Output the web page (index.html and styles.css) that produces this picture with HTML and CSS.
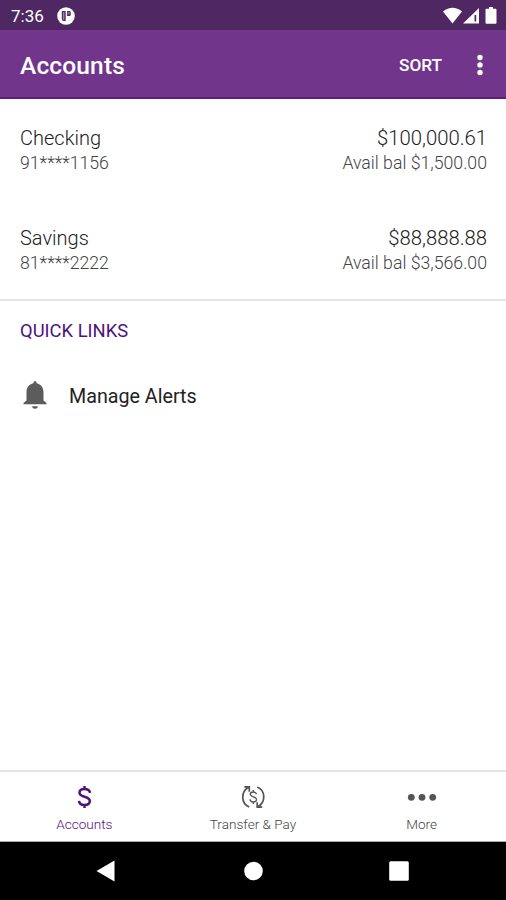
FILE: index.html
```html
<!DOCTYPE html>
<html lang="en">
<head>
<meta charset="utf-8">
<title>Accounts</title>
<link rel="stylesheet" href="styles.css">
</head>
<body>
<div class="status">
  <span class="clock">7:36</span>
  <svg class="app-badge" width="18" height="18" viewBox="0 0 18 18"><circle cx="9" cy="9" r="8.800" fill="#fff"/><path d="M4.800 4h3.900v10H7a2.200 2.200 0 0 1-2.200-2.200zM10.100 4h2.200a1.500 1.500 0 0 1 1.500 1.500v2A1.500 1.500 0 0 1 12.300 9h-2.200z" fill="#4e2763"/><path d="M6 5h1.400v7.800H6zM11 5.200h1.600v2H11z" fill="#9c86a8"/></svg>
  <svg class="signals" width="56" height="18" viewBox="0 0 56 18" fill="#fff"><path d="M0 4.500Q9.500-3 19 4.500L9.500 16.500z"/><path fill-rule="evenodd" d="M20 16.500L36 1v15.500zM31.500 8v6.500h1.700V8z"/><path d="M46 0h4v1.700h2.500q1 0 1 1v13q0 1-1 1h-9q-1 0-1-1v-13q0-1 1-1H46z"/></svg>
</div>
<header class="app-bar">
  <h1>Accounts</h1>
  <span class="sort">SORT</span>
  <svg width="6" height="22" viewBox="0 0 6 22" fill="#fff"><circle cx="3" cy="3.500" r="2.700"/><circle cx="3" cy="11" r="2.700"/><circle cx="3" cy="18.500" r="2.700"/></svg>
</header>
<main>
  <section class="accounts">
    <div class="account">
      <div><div class="name">Checking</div><div class="number">91****1156</div></div>
      <div class="balances"><div class="amount">$100,000.61</div><div class="available">Avail bal $1,500.00</div></div>
    </div>
    <div class="account">
      <div><div class="name">Savings</div><div class="number">81****2222</div></div>
      <div class="balances"><div class="amount">$88,888.88</div><div class="available">Avail bal $3,566.00</div></div>
    </div>
  </section>
  <section class="links">
    <h2>QUICK LINKS</h2>
    <div class="link">
      <svg class="bell" width="24" height="30" viewBox="0 0 24 30" fill="#5c5c5c"><path d="M10.300 3.200Q10.600 1 12 1t1.700 2.200C18 4.200 20.500 7.600 20.500 12v8.500l3 2.600v1.200H.5v-1.200l3-2.600V12c0-4.400 2.500-7.800 6.800-8.800zM9.200 26.200h5.600a2.800 2.500 0 0 1-5.600 0z"/></svg>
      <span>Manage Alerts</span>
    </div>
  </section>
</main>
<nav class="tabs">
  <div class="tab active">
    <svg width="28" height="26" viewBox="0 0 28 26" fill="none" stroke="#4f127d" stroke-width="2.500"><path d="M20 8.900C19.700 6.300 17.700 5 14.500 5c-3 0-5 1.400-5 3.700 0 5.300 10.300 2.900 10.300 8.400 0 2.500-2.100 4-5.300 4-3.400 0-5.300-1.500-5.500-4.200M14.500 2v3.500M14.500 20.500V24"/></svg>
    <span>Accounts</span>
  </div>
  <div class="tab">
    <svg width="28" height="26" viewBox="0 0 28 26" fill="none" stroke="#555" stroke-width="1.700"><path d="M10.300 23C1.800 19.500 1.600 8 9.500 3.300M5.300 2.800h5v5M18.200 3C26.700 6.500 26.900 18 19 22.700M23.200 23.200h-5v-5"/><path stroke-width="1.300" d="M17.400 10.200c-.2-1.500-1.300-2.200-3.100-2.200-1.900 0-3 .8-3 2.200 0 3.300 6.200 1.900 6.200 5.300 0 1.600-1.200 2.400-3.200 2.400-2 0-3.200-.9-3.300-2.500M14.300 6v2M14.300 18v2"/></svg>
    <span>Transfer &amp; Pay</span>
  </div>
  <div class="tab">
    <svg width="30" height="26" viewBox="0 0 30 26" fill="#555"><circle cx="4.300" cy="13.300" r="3.400"/><circle cx="15" cy="13.300" r="3.400"/><circle cx="25.700" cy="13.300" r="3.400"/></svg>
    <span>More</span>
  </div>
</nav>
<footer class="system">
  <svg width="20" height="24" viewBox="0 0 20 24"><path d="M.5 12L18.500 1.500v21z" fill="#fff"/></svg>
  <svg width="20" height="20" viewBox="0 0 20 20"><circle cx="10.500" cy="10" r="9.300" fill="#fff"/></svg>
  <svg width="20" height="20" viewBox="0 0 20 20"><rect x=".2" y=".2" width="19.600" height="19.600" rx="1.500" fill="#fff"/></svg>
</footer>
</body>
</html>
```
FILE: styles.css
```css
* { box-sizing: border-box; }
body {
  margin: 0;
  height: 900px;
  display: flex;
  flex-direction: column;
  background: #fff;
  font-family: Roboto, "Liberation Sans", sans-serif;
  color: #222;
}
svg { display: block; flex: none; }
h1, h2 { margin: 0; }

.status {
  height: 30px;
  padding: 1px 7px 0 11px;
  display: flex;
  align-items: center;
  background: #4e2763;
  color: #fff;
}
.clock { width: 46px; font-size: 17px; }
.signals { margin-left: auto; }

.app-bar {
  height: 69px;
  padding: 2px 23px 0 20px;
  display: flex;
  align-items: center;
  background: #71368c;
  border-bottom: 2px solid #5c1d7c;
  color: #fff;
}
.app-bar h1 {
  flex: 1;
  padding-top: 1px;
  font-size: 24.500px;
  font-weight: 500;
  letter-spacing: .15px;
}
.sort { margin-right: 35px; font-size: 17.200px; font-weight: 500; }

main { flex: 1; }
.accounts {
  height: 202px;
  padding-top: 26px;
  border-bottom: 2px solid #e4e4e4;
}
.account {
  height: 100px;
  padding: 0 19px 0 20px;
  display: flex;
  justify-content: space-between;
}
.name, .amount { height: 26px; line-height: 26px; font-size: 20px; font-weight: 300; }
.amount { font-size: 20.300px; }
.number, .available {
  height: 24px;
  line-height: 25px;
  font-size: 17.700px;
  font-weight: 300;
  color: #444;
}
.balances { text-align: right; }

.links { padding: 19px 20px; }
.links h2 {
  line-height: 22px;
  font-size: 18.400px;
  font-weight: 400;
  color: #4f127d;
}
.link {
  margin-top: 38px;
  padding-left: 3px;
  height: 32px;
  display: flex;
  align-items: center;
  gap: 22px;
  font-size: 19.700px;
}
.bell { margin-bottom: 2px; }

.tabs {
  height: 72px;
  border-top: 2px solid #e3e3e3;
  border-bottom: 1px solid #aaa;
  display: grid;
  grid-template-columns: repeat(3, 1fr);
}
.tab {
  padding-top: 12px;
  display: flex;
  flex-direction: column;
  align-items: center;
  gap: 5px;
  line-height: 18px;
  font-size: 13.600px;
  font-weight: 300;
  color: #444;
}
.active { color: #4f127d; }

.system {
  height: 58px;
  padding: 0 97px 0 96px;
  background: #000;
  display: flex;
  justify-content: space-between;
  align-items: center;
}
```
